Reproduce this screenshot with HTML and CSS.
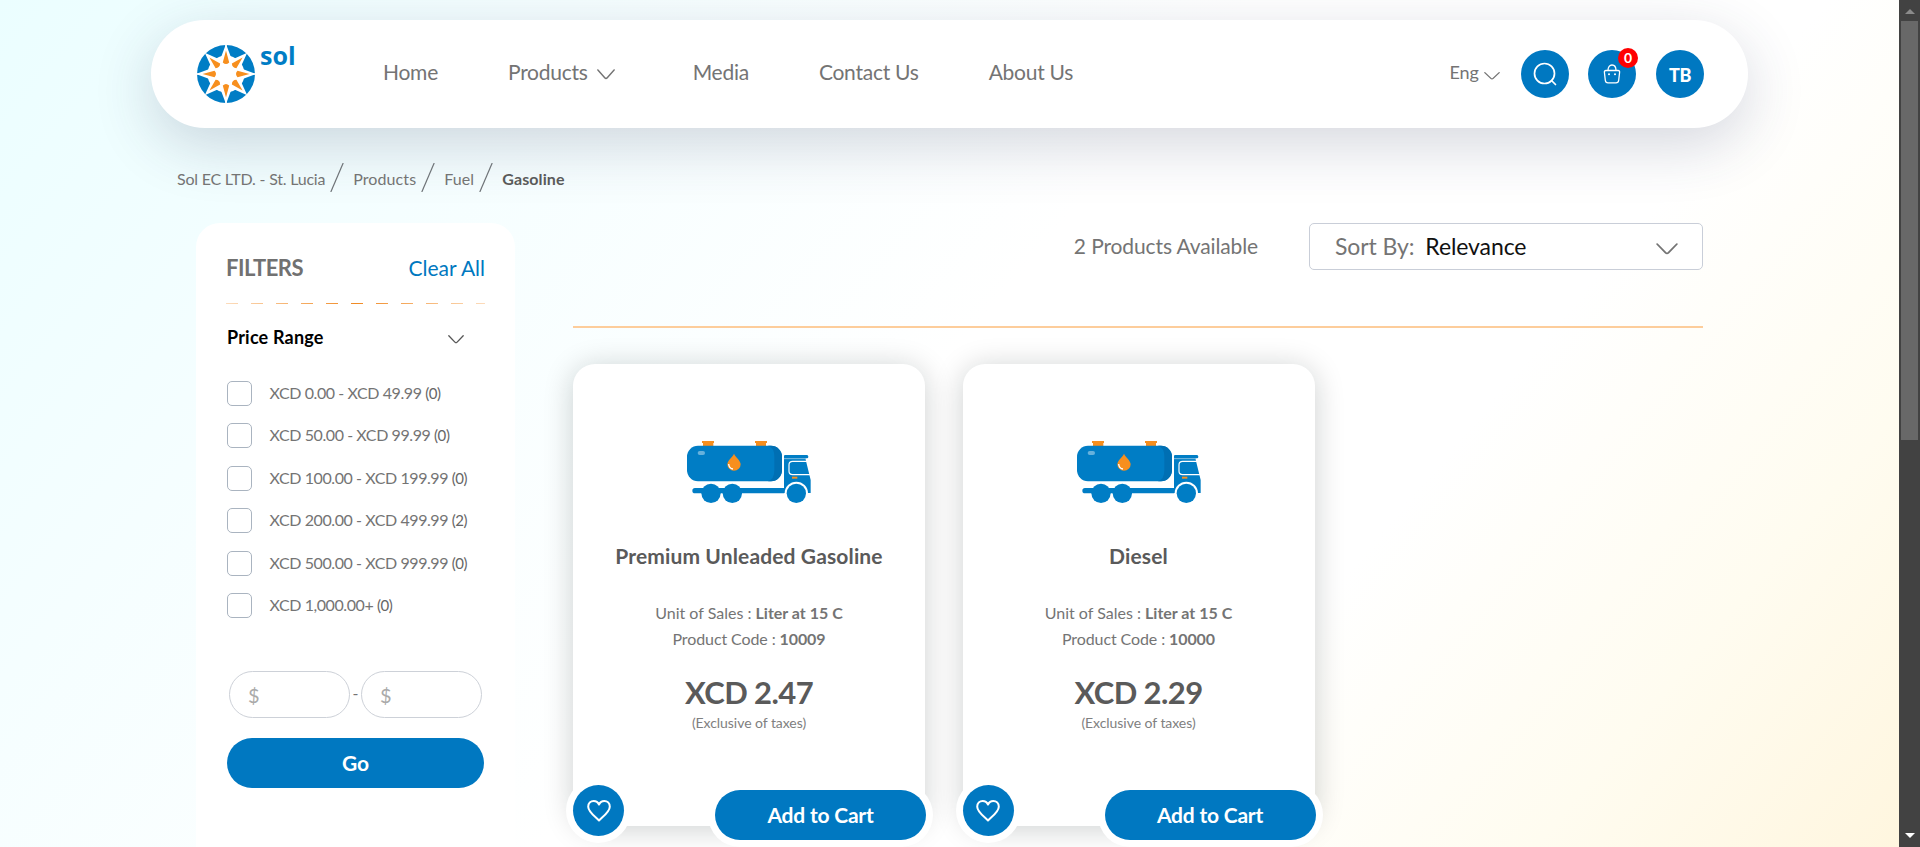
FILE: index.html
```html
<!DOCTYPE html>
<html lang="en">
<head>
<meta charset="utf-8">
<title>Gasoline | Sol EC LTD. - St. Lucia</title>
<link rel="stylesheet" href="styles.css">
</head>
<body>
<svg class="defs" aria-hidden="true">
  <symbol id="truck" viewBox="0 0 480 270">
    <path fill="#f78f1e" d="M96 48h36v6h-2v10H99V54h-3zM255 48h36v6h-3v10h-30V54h-3z"/>
    <rect x="51" y="62" width="285" height="107" rx="33" fill="#007dc5"/>
    <path fill="#006fb3" d="M294 62h9a33 33 0 0 1 33 33v41a33 33 0 0 1-33 33h-9q19-6 19-33V95q0-27-19-33z"/>
    <rect x="83" y="78" width="22" height="12" rx="6" fill="#66b1dc"/>
    <path fill="#f78f1e" d="M192 86c5 12 20 20 20 32a20 19 0 0 1-40 0c0-12 15-20 20-32z"/>
    <path fill="none" stroke="#fff" stroke-width="4" d="M176 117q1 13 13 15"/>
    <path fill="#007dc5" d="M75 189h268v16H75a8 8 0 0 1 0-16z"/>
    <path fill="#007dc5" d="M345 90h66q4 0 4 5t-4 5h-5l16 65v39h-80V94q0-4 3-4z"/>
    <path fill="none" stroke="#fff" stroke-width="3.5" d="M412 109h-44q-11 0-11 10v20q0 10 11 10h55"/>
    <path fill="none" stroke="#fff" stroke-width="1.5" d="M342 101h64"/>
    <rect x="366" y="155" width="16" height="6" fill="#f78f1e"/>
    <circle cx="379" cy="205" r="35" fill="#fff"/>
    <g fill="#007dc5"><circle cx="123" cy="205" r="29"/><circle cx="187" cy="205" r="29"/><circle cx="379" cy="205" r="29"/></g>
  </symbol>
  <symbol id="heart" viewBox="0 0 24 24">
    <path fill="none" stroke="#fff" stroke-width="2" stroke-linejoin="round" d="M12 21.500C8.500 18 1.200 12.800 1.200 7.700 1.200 4.300 3.700 2 6.700 2 9.200 2 11 3.300 12 5.500 13 3.300 14.800 2 17.300 2c3 0 5.500 2.300 5.500 5.700 0 5.100-7.300 10.300-10.800 13.800z"/>
  </symbol>
  <symbol id="chev" viewBox="0 0 20 12" preserveAspectRatio="none">
    <path fill="none" stroke="currentColor" stroke-width="1.600" stroke-linejoin="round" stroke-linecap="round" d="M1 1l7.600 8.600q1.400 1.600 2.800 0L19 1"/>
  </symbol>
  <symbol id="slash" viewBox="0 0 14 29"><path stroke="#6e7377" stroke-width="1.200" d="M13.200 0L.8 29"/></symbol>
</svg>
<div class="window">
  <div class="page">
    <header class="header">
      <a class="logo">
        <svg class="logo-mark" viewBox="-30 -30 60 60">
          <circle r="29" fill="#007dc5"/>
          <g fill="#fff">
            <circle r="18.500"/>
            <g id="ray"><path d="M0-30L6-14H-6z"/><path d="M0-30L6-14H-6z" transform="rotate(45)"/><path d="M0-30L6-14H-6z" transform="rotate(90)"/><path d="M0-30L6-14H-6z" transform="rotate(135)"/></g>
            <use href="#ray" transform="rotate(180)"/>
            <path d="M-.8-30H.8V30H-.8zM-30-.8V.8H30V-.8z"/>
          </g>
          <g fill="#f78f1e">
            <g id="pt"><path d="M0-23.500L3.200-11.500Q0-8.500-3.200-11.500z"/><path d="M0-23.500L3.200-11.500Q0-8.500-3.200-11.500z" transform="rotate(45)"/><path d="M0-23.500L3.200-11.500Q0-8.500-3.200-11.500z" transform="rotate(90)"/><path d="M0-23.500L3.200-11.500Q0-8.500-3.200-11.500z" transform="rotate(135)"/></g>
            <use href="#pt" transform="rotate(180)"/>
          </g>
        </svg>
        <span class="logo-name">sol</span>
      </a>
      <nav class="nav">
        <a>Home</a>
        <a class="has-menu">Products<svg class="nav-chev"><use href="#chev"/></svg></a>
        <a>Media</a>
        <a>Contact Us</a>
        <a>About Us</a>
      </nav>
      <div class="tools">
        <span class="lang">Eng<svg class="lang-chev"><use href="#chev"/></svg></span>
        <span class="round">
          <svg width="24" height="24" viewBox="0 0 24 24" fill="none" stroke="#fff" stroke-width="1.700" stroke-linecap="round"><circle cx="11.500" cy="11.500" r="10"/><path d="M18.500 18.500l4 4"/></svg>
        </span>
        <span class="round cart">
          <svg width="18" height="20" viewBox="0 0 18 20" fill="none" stroke="#fff" stroke-width="1.300"><path d="M3 6.500h12q1.800 0 1.600 1.800l-.9 8q-.3 2.600-2.700 2.600H5q-2.400 0-2.700-2.600l-.9-8Q1.200 6.500 3 6.500z"/><path d="M5 6.500C5 3 6.800 1 9 1s4 2 4 5.500"/><path stroke-width="2" stroke-linecap="round" d="M6 10.200h.01M12 10.200h.01"/></svg>
          <span class="badge">0</span>
        </span>
        <span class="round user">TB</span>
      </div>
    </header>
    <div class="crumbs">
      <a class="c1">Sol EC LTD. - St. Lucia</a><svg class="slash"><use href="#slash"/></svg>
      <a>Products</a><svg class="slash"><use href="#slash"/></svg>
      <a>Fuel</a><svg class="slash"><use href="#slash"/></svg>
      <b>Gasoline</b>
    </div>
    <main class="main">
      <aside class="filters">
        <div class="filters-head"><h2>FILTERS</h2><a>Clear All</a></div>
        <div class="dashes"></div>
        <div class="facet-head"><h3>Price Range</h3><svg class="facet-chev"><use href="#chev"/></svg></div>
        <ul class="facets">
          <li><i></i><span>XCD 0.00 - XCD 49.99 <em>(0)</em></span></li>
          <li><i></i><span>XCD 50.00 - XCD 99.99 <em>(0)</em></span></li>
          <li><i></i><span>XCD 100.00 - XCD 199.99 <em>(0)</em></span></li>
          <li><i></i><span>XCD 200.00 - XCD 499.99 <em>(2)</em></span></li>
          <li><i></i><span>XCD 500.00 - XCD 999.99 <em>(0)</em></span></li>
          <li><i></i><span>XCD 1,000.00+ <em>(0)</em></span></li>
        </ul>
        <div class="range"><span class="money">$</span><span class="to">-</span><span class="money">$</span></div>
        <div class="go">Go</div>
      </aside>
      <section class="results">
        <div class="toolbar">
          <span class="count">2 Products Available</span>
          <div class="sort"><span class="sort-label">Sort By:</span><span class="sort-value">Relevance</span><svg class="sort-chev"><use href="#chev"/></svg></div>
        </div>
        <div class="cards">
          <article class="card">
            <svg class="truck"><use href="#truck"/></svg>
            <h4>Premium Unleaded Gasoline</h4>
            <p class="unit">Unit of Sales : <b>Liter at 15 C</b></p>
            <p class="code">Product Code : <b>10009</b></p>
            <div class="price">XCD 2.47</div>
            <div class="tax">(Exclusive of taxes)</div>
            <div class="actions"><span class="fav"><svg width="24" height="24"><use href="#heart"/></svg></span><span class="add">Add to Cart</span></div>
          </article>
          <article class="card">
            <svg class="truck"><use href="#truck"/></svg>
            <h4>Diesel</h4>
            <p class="unit">Unit of Sales : <b>Liter at 15 C</b></p>
            <p class="code">Product Code : <b>10000</b></p>
            <div class="price">XCD 2.29</div>
            <div class="tax">(Exclusive of taxes)</div>
            <div class="actions"><span class="fav"><svg width="24" height="24"><use href="#heart"/></svg></span><span class="add">Add to Cart</span></div>
          </article>
        </div>
      </section>
    </main>
  </div>
  <div class="scrollbar">
    <svg class="arrow" viewBox="0 0 10 5"><path fill="#8b8b8b" d="M5 0l5 5H0z"/></svg>
    <div class="thumb"></div>
    <svg class="arrow down" viewBox="0 0 10 5"><path fill="#fff" d="M5 5l5-5H0z"/></svg>
  </div>
</div>
</body>
</html>
```
FILE: styles.css
```css
* { box-sizing: border-box; }
body { margin: 0; font-family: Lato, sans-serif; color: #747474; overflow: hidden; }
h2, h3, h4, p, ul { margin: 0; padding: 0; }
svg { display: block; flex: none; }
.defs { width: 0; height: 0; position: absolute; }
.window { display: flex; height: 847px; overflow: hidden; }
.page {
  width: 1899px; height: 847px; overflow: hidden;
  background: linear-gradient(130deg, #ebfeff 0%, #f5feff 22%, #fff 48%, #fff 70%, #fffcf0 86%, #fff6df 100%);
}

.header {
  display: flex; align-items: center; white-space: nowrap;
  width: 1597px; height: 108px; margin: 20px 0 0 151px; padding: 0 44px 0 45px;
  background: #fff; border-radius: 54px;
  box-shadow: 0 17px 60px rgba(45, 55, 90, .2);
}
.logo { display: flex; width: 187px; }
.logo-mark { width: 60px; height: 60px; }
.logo-name { font: 700 25px/22px "Open Sans", sans-serif; color: #007dc5; margin-left: 4px; }
.nav { display: flex; align-items: center; gap: 70px; font-size: 21px; letter-spacing: -.25px; line-height: 24px; padding-bottom: 5px; }
.has-menu { display: flex; align-items: center; margin-right: 8px; }
.nav-chev { width: 18px; height: 11px; margin: 6px 0 0 9px; }
.tools { display: flex; align-items: center; margin-left: auto; }
.lang { display: flex; align-items: center; font-size: 18px; line-height: 24px; padding-bottom: 5px; margin-right: 21px; }
.lang-chev { width: 16px; height: 8px; margin: 9px 0 0 5px; }
.round {
  display: flex; align-items: center; justify-content: center; position: relative;
  width: 48px; height: 48px; border-radius: 50%; background: #0078c1;
}
.cart { margin: 0 20px 0 19px; }
.badge {
  position: absolute; right: -2px; top: -2px; width: 20px; height: 20px; border-radius: 50%;
  background: #f00; color: #fff; font-size: 14px; font-weight: 700; line-height: 20px; text-align: center;
}
.user { color: #fff; font-weight: 900; font-size: 18px; letter-spacing: -.5px; padding-top: 2px; }

.crumbs { display: flex; align-items: center; height: 30px; margin: 35px 0 0 177px; font-size: 16px; line-height: 20px; letter-spacing: .1px; white-space: nowrap; }
.slash { width: 14px; height: 29px; margin: -2px 9px 0 5px; }
.crumbs a, .crumbs b { padding-top: 2px; }
.crumbs .c1 { letter-spacing: -.22px; }
.crumbs b { color: #5a5a5a; }

.main { display: flex; margin: 30px 0 0 196px; gap: 58px; }
.filters { width: 319px; height: 680px; background: #fff; border-radius: 24px; padding: 0 30px 0 31px; }
.filters-head { display: flex; justify-content: space-between; align-items: center; height: 80px; padding-top: 9px; font-size: 21px; white-space: nowrap; }
.filters-head h2 { font-size: 22px; letter-spacing: -.5px; color: #717171; margin-left: -1px; }
.filters-head a { color: #0078bf; }
.dashes {
  height: 1px; width: 259px; margin-left: -1px;
  background: repeating-linear-gradient(90deg, transparent 0 12px, #fff 12px 25px), linear-gradient(90deg, #fcdcbc, #f08a24 50%, #fcdcbc);
}
.facet-head { display: flex; justify-content: space-between; align-items: center; height: 24px; margin-top: 21px; padding-right: 21px; color: #000; }
.facet-head h3 { font-size: 18px; letter-spacing: .2px; }
.facet-chev { width: 16px; height: 9px; color: #555; margin-top: 4px; }
.facets { list-style: none; margin-top: 32px; }
.facets li { display: flex; align-items: center; height: 25px; margin-bottom: 17.400px; font-size: 16px; letter-spacing: -.42px; white-space: nowrap; }
.facets span { padding-bottom: 2px; }
.facets i { width: 25px; height: 25px; border: 1px solid #aab4c0; border-radius: 5px; margin-right: 17.500px; }
.facets em { font-style: normal; font-size: 15px; color: #666; }
.range { display: flex; margin: 53px 0 0 2px; }
.money { width: 121px; height: 47px; border: 1px solid #cdd1d8; border-radius: 24px; padding-left: 18px; font-size: 20px; line-height: 47px; color: #aaa; }
.to { width: 11px; text-align: center; line-height: 44px; }
.go { width: 257px; height: 50px; margin-top: 20px; border-radius: 25px; background: #0078c1; color: #fff; font-weight: 700; font-size: 21px; line-height: 49px; text-align: center; }

.results { width: 1130px; }
.toolbar { display: flex; justify-content: flex-end; align-items: center; height: 105px; padding-bottom: 56px; border-bottom: 2px solid #fdcd9b; white-space: nowrap; }
.count { margin-right: 51px; font-size: 21px; letter-spacing: -.12px; padding-bottom: 3px; }
.sort { display: flex; align-items: center; width: 394px; height: 47px; border: 1px solid #c9ced8; border-radius: 5px; background: #fff; padding: 0 24px 0 25px; font-size: 23px; letter-spacing: -.1px; }
.sort-label, .sort-value { padding-bottom: 1px; }
.sort-value { color: #111; margin-left: 11px; }
.sort-chev { width: 22px; height: 12px; margin-left: auto; margin-top: 4px; }
.cards { display: flex; gap: 37.500px; margin-top: 36px; }
.card { display: flex; flex-direction: column; width: 352px; height: 462px; background: #fff; border-radius: 22px; box-shadow: 0 3px 30px rgba(0, 20, 20, .2); text-align: center; white-space: nowrap; }
.truck { width: 160px; height: 90px; margin: 61px 0 0 97px; }
.card h4 { font-size: 21px; line-height: 26px; letter-spacing: .13px; margin-top: 28px; color: #5a5a5a; }
.unit, .code { font-size: 16px; line-height: 26px; }
.unit { margin-top: 31px; }
.code { letter-spacing: -.1px; }
.price { font-size: 31px; line-height: 36px; font-weight: 700; letter-spacing: -.6px; color: #5a5a5a; margin-top: 22px; }
.tax { font-size: 14px; line-height: 18px; letter-spacing: -.05px; margin-top: 4px; color: #808080; }
.actions { display: flex; justify-content: space-between; margin: auto -1px -14px 0; }
.fav { display: flex; align-items: center; justify-content: center; width: 51px; height: 51px; border-radius: 50%; background: #0078c1; box-shadow: 0 0 0 7px #fff; margin: -5px 0 4px; }
.add { width: 211px; height: 50px; border-radius: 25px; background: #0078c1; box-shadow: 0 0 0 7px #fff; color: #fff; font-weight: 700; font-size: 21px; letter-spacing: -.2px; line-height: 49px; }

.scrollbar { display: flex; flex-direction: column; align-items: center; width: 21px; height: 847px; background: #424242; }
.arrow { width: 10px; height: 5px; margin-top: 9px; }
.thumb { width: 17px; height: 419px; background: #686868; margin-top: 7px; }
.down { margin: auto 0 9px; }
```
